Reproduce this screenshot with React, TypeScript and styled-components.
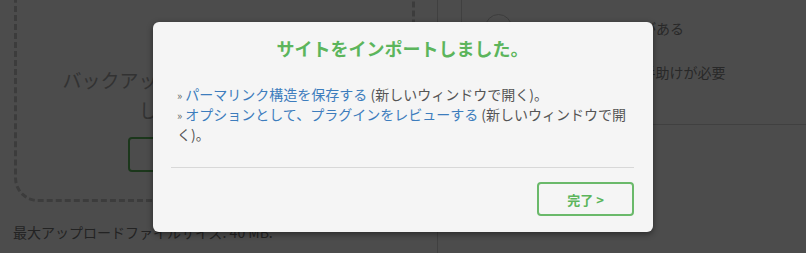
import React from "react";
import styled, { createGlobalStyle } from "styled-components";

const Global = createGlobalStyle`
  html, body { margin: 0; padding: 0; background: #fff; overflow: hidden; }
  body { font-family: "Noto Sans CJK JP", "Noto Sans", sans-serif; }
  * { box-sizing: border-box; }
`;

const Page = styled.div`
  position: relative;
  width: 806px;
  height: 253px;
  overflow: hidden;
  display: flex;
  background: #fff;
`;

const LeftColumn = styled.div`
  width: 437px;
  flex: none;
  padding: 0 22px 0 14px;
  display: flex;
  flex-direction: column;
`;

const DropZone = styled.div`
  margin-top: -40px;
  height: 242px;
  border: 3px dashed #c8c8c8;
  border-radius: 24px;
  display: flex;
  flex-direction: column;
  align-items: center;
  padding-top: 102px;
`;

const DropText = styled.div`
  font-size: 19px;
  line-height: 30px;
  color: #a8a8a8;
  text-align: center;
  width: 320px;
`;

const OutlineButton = styled.div`
  margin-top: 12px;
  width: 173px;
  height: 35px;
  border: 2px solid #5cb85c;
  border-radius: 4px;
  color: #5cb85c;
  font-size: 14px;
  font-weight: 700;
  display: flex;
  align-items: center;
  justify-content: center;
`;

const MaxSize = styled.div`
  margin-top: 20px;
  font-size: 14px;
  line-height: 20px;
  color: #777;
  margin-left: -1px;
`;

const RightPanel = styled.div`
  flex: 1;
  border-left: 1px solid #d8d8d8;
  display: flex;
  flex-direction: column;
`;

const HelpSection = styled.div`
  height: 125px;
  border-bottom: 1px solid #d8d8d8;
  display: flex;
`;

const Rail = styled.div`
  width: 24px;
  flex: none;
  border-right: 1px solid #d8d8d8;
`;

const HelpList = styled.div`
  display: flex;
  flex-direction: column;
  gap: 17px;
  padding: 14px 0 0 23px;
`;

const HelpItem = styled.div`
  display: flex;
  align-items: center;
  gap: 18px;
  font-size: 14px;
  color: #888;
  white-space: nowrap;
`;

const CircleIcon = styled.div`
  width: 27px;
  height: 27px;
  border-radius: 50%;
  border: 1.5px solid #c8c8c8;
  flex: none;
`;

const Overlay = styled.div`
  position: absolute;
  inset: 0;
  background: rgba(0, 0, 0, 0.7);
`;

const Modal = styled.div`
  position: absolute;
  left: 153px;
  top: 22px;
  width: 500px;
  height: 210px;
  background: #f5f5f5;
  border-radius: 6px;
  box-shadow: 0 2px 6px rgba(0, 0, 0, 0.45);
  padding: 0 19px 0 18px;
  display: flex;
  flex-direction: column;
`;

const Title = styled.h2`
  margin: 13px 0 0;
  font-size: 18px;
  line-height: 26px;
  font-weight: 700;
  color: #5cb55c;
  text-align: center;
`;

const Body = styled.div`
  margin-top: 24px;
  padding: 0 6px 0 6px;
  font-size: 14px;
  line-height: 19px;
  color: #555;
`;

const Line = styled.div`
  &::before {
    content: "»";
    font-size: 11px;
    color: #666;
    margin-right: 3px;
  }
`;

const Link = styled.a`
  color: #3d7dbd;
  text-decoration: none;
`;

const Divider = styled.hr`
  margin: 23px 0 0;
  border: none;
  border-top: 1.5px solid #d8d8d8;
`;

const Footer = styled.div`
  margin-top: 14px;
  display: flex;
  justify-content: flex-end;
`;

const DoneButton = styled.button`
  width: 97px;
  height: 34px;
  border: 2px solid #6ab96a;
  border-radius: 4px;
  background: transparent;
  color: #5cb55c;
  font-family: "Noto Sans CJK JP", "Noto Sans", sans-serif;
  font-size: 13px;
  font-weight: 700;
  padding: 0;
  cursor: pointer;
`;

export default function App() {
  return (
    <>
      <Global />
      <Page>
        <LeftColumn>
          <DropZone>
            <DropText>バックアップをドラッグ＆ドロップしてアップロード</DropText>
            <OutlineButton>ファイルを選択</OutlineButton>
          </DropZone>
          <MaxSize>最大アップロードファイルサイズ: 40 MB.</MaxSize>
        </LeftColumn>
        <RightPanel>
          <HelpSection>
            <Rail />
            <HelpList>
              <HelpItem>
                <CircleIcon />
                プラグインの質問がある
              </HelpItem>
              <HelpItem>
                <CircleIcon />
                移行作業に関して手助けが必要
              </HelpItem>
            </HelpList>
          </HelpSection>
        </RightPanel>
        <Overlay />
        <Modal>
          <Title>サイトをインポートしました。</Title>
          <Body>
            <Line>
              <Link href="#">パーマリンク構造を保存する</Link> (新しいウィンドウで開く)。
            </Line>
            <Line>
              <Link href="#">オプションとして、プラグインをレビューする</Link> (新しいウィンドウで開く)。
            </Line>
          </Body>
          <Divider />
          <Footer>
            <DoneButton>完了 &gt;</DoneButton>
          </Footer>
        </Modal>
      </Page>
    </>
  );
}
